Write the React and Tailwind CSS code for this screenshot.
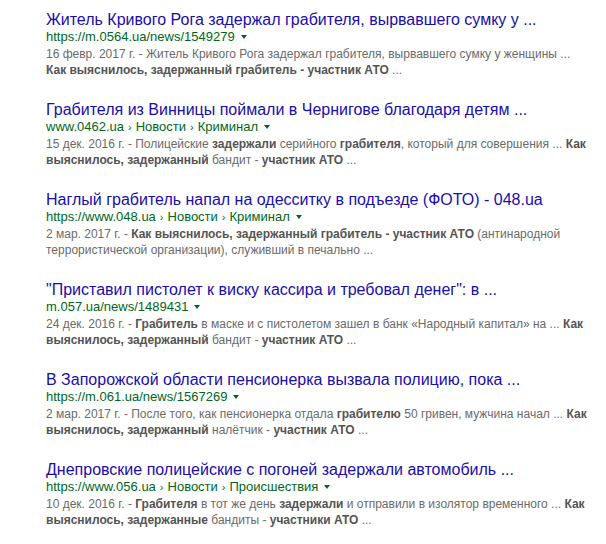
import React from "react";

const results = [
  {
    title: "Житель Кривого Рога задержал грабителя, вырвавшего сумку у ...",
    url: ["https://m.0564.ua/news/1549279"],
    lines: [
      [["16 февр. 2017 г. - Житель Кривого Рога задержал грабителя, вырвавшего сумку у женщины ...", false]],
      [["Как выяснилось, задержанный грабитель - участник АТО", true], [" ...", false]],
    ],
  },
  {
    title: "Грабителя из Винницы поймали в Чернигове благодаря детям ...",
    url: ["www.0462.ua", "Новости", "Криминал"],
    lines: [
      [
        ["15 дек. 2016 г. - Полицейские ", false],
        ["задержали", true],
        [" серийного ", false],
        ["грабителя", true],
        [", который для совершения ... ", false],
        ["Как", true],
      ],
      [["выяснилось, задержанный", true], [" бандит - ", false], ["участник АТО", true], [" ...", false]],
    ],
  },
  {
    title: "Наглый грабитель напал на одесситку в подъезде (ФОТО) - 048.ua",
    url: ["https://www.048.ua", "Новости", "Криминал"],
    lines: [
      [
        ["2 мар. 2017 г. - ", false],
        ["Как выяснилось, задержанный грабитель - участник АТО", true],
        [" (антинародной", false],
      ],
      [["террористической организации), служивший в печально ...", false]],
    ],
  },
  {
    title: "\"Приставил пистолет к виску кассира и требовал денег\": в ...",
    url: ["m.057.ua/news/1489431"],
    lines: [
      [
        ["24 дек. 2016 г. - ", false],
        ["Грабитель", true],
        [" в маске и с пистолетом зашел в банк «Народный капитал» на ... ", false],
        ["Как", true],
      ],
      [["выяснилось, задержанный", true], [" бандит - ", false], ["участник АТО", true], [" ...", false]],
    ],
  },
  {
    title: "В Запорожской области пенсионерка вызвала полицию, пока ...",
    url: ["https://m.061.ua/news/1567269"],
    lines: [
      [
        ["2 мар. 2017 г. - После того, как пенсионерка отдала ", false],
        ["грабителю", true],
        [" 50 гривен, мужчина начал ... ", false],
        ["Как", true],
      ],
      [["выяснилось, задержанный", true], [" налётчик - ", false], ["участник АТО", true], [" ...", false]],
    ],
  },
  {
    title: "Днепровские полицейские с погоней задержали автомобиль ...",
    url: ["https://www.056.ua", "Новости", "Происшествия"],
    lines: [
      [
        ["10 дек. 2016 г. - ", false],
        ["Грабителя", true],
        [" в тот же день ", false],
        ["задержали", true],
        [" и отправили в изолятор временного ... ", false],
        ["Как", true],
      ],
      [["выяснилось, задержанные", true], [" бандиты - ", false], ["участники АТО", true], [" ...", false]],
    ],
  },
];

function Result({ r }) {
  return (
    <div className="mb-[22px]">
      <div className="text-[16px] leading-[20px] text-[#1a0dab] whitespace-nowrap">{r.title}</div>
      <div className="flex items-center text-[13px] leading-[14px] text-[#006621] whitespace-nowrap">
        {r.url.map((u, i) => (
          <span key={i}>
            {i > 0 && <span className="mx-[4px] text-[11px]">›</span>}
            {u}
          </span>
        ))}
        <span className="ml-[6px] inline-block w-0 h-0 border-l-[3px] border-r-[3px] border-t-[4px] border-l-transparent border-r-transparent border-t-[#006621]" />
      </div>
      <div className="mt-[2px] text-[12px] leading-[16px] text-[#6a6a6a]">
        {r.lines.map((line, li) => (
          <div key={li} className="whitespace-pre">
            {line.map(([t, b], i) =>
              b ? (
                <b key={i} className="font-bold text-[#545454]">{t}</b>
              ) : (
                <span key={i}>{t}</span>
              )
            )}
          </div>
        ))}
      </div>
    </div>
  );
}

export default function App() {
  return (
    <div
      className="w-[606px] h-[544px] bg-white overflow-hidden pl-[46px] pt-[10px]"
      style={{ fontFamily: '"Liberation Sans", Arial, sans-serif' }}
    >
      {results.map((r, i) => (
        <Result key={i} r={r} />
      ))}
    </div>
  );
}
